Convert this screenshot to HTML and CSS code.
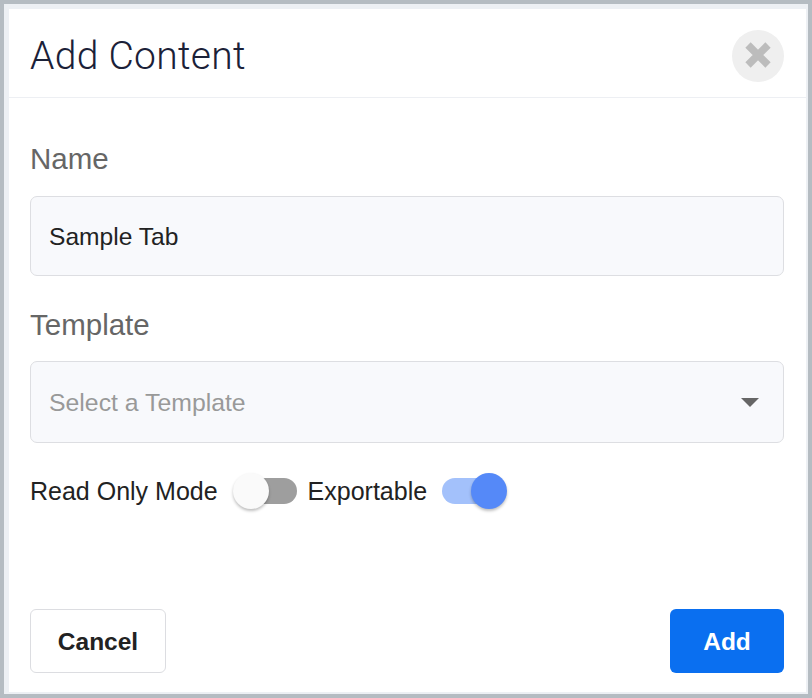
FILE: index.html
```html
<!DOCTYPE html>
<html>
<head>
<meta charset="utf-8">
<link rel="stylesheet" href="styles.css">
</head>
<body>
<div class="frame">
  <div class="panel">
    <div class="header">
      <h1 class="title">Add Content</h1>
      <button class="close" aria-label="Close">
        <svg width="28" height="28" viewBox="0 0 28 28"><path d="M4 4 L24 24 M24 4 L4 24" stroke="#bcbcbc" stroke-width="7.5" stroke-linecap="butt"/></svg>
      </button>
    </div>
    <div class="body">
      <label class="label">Name</label>
      <div class="input">Sample Tab</div>
      <label class="label label-template">Template</label>
      <div class="select">
        <span class="placeholder">Select a Template</span>
        <span class="caret"></span>
      </div>
      <div class="toggles">
        <span class="toggle-label">Read Only Mode</span>
        <span class="switch off"><span class="track"></span><span class="knob"></span></span>
        <span class="toggle-label">Exportable</span>
        <span class="switch on"><span class="track"></span><span class="knob"></span></span>
      </div>
    </div>
    <div class="footer">
      <button class="btn btn-cancel">Cancel</button>
      <button class="btn btn-add">Add</button>
    </div>
  </div>
</div>
</body>
</html>
```
FILE: styles.css
```css
html, body {
  margin: 0;
  padding: 0;
}
body {
  background: #b5bcc2;
  width: 812px;
  height: 698px;
  padding: 4px;
  box-sizing: border-box;
  font-family: "Liberation Sans", Arial, sans-serif;
}
.frame {
  background: #edf0f4;
  height: 690px;
  padding: 5px 2px 2px 5px;
  box-sizing: border-box;
}
.panel {
  background: #ffffff;
  height: 100%;
  display: flex;
  flex-direction: column;
  box-sizing: border-box;
}
.header {
  height: 89px;
  box-sizing: border-box;
  border-bottom: 1px solid #edeff3;
  display: flex;
  align-items: center;
  justify-content: space-between;
  padding: 0 22px 0 21px;
}
.title {
  margin: 0;
  font-family: Roboto, "Liberation Sans", sans-serif;
  font-weight: 300;
  font-size: 39px;
  color: #1b2138;
  letter-spacing: 0.3px;
  padding-top: 6px;
}
.close {
  width: 52px;
  height: 52px;
  border-radius: 50%;
  border: none;
  background: #efefef;
  display: flex;
  align-items: center;
  justify-content: center;
  padding: 0;
  margin-top: 6px;
}
.close svg {
  margin-top: -2px;
}
.body {
  padding: 45px 22px 0 21px;
  display: flex;
  flex-direction: column;
}
.label {
  font-size: 29.5px;
  line-height: 32px;
  color: #666666;
  height: 32px;
}
.input, .select {
  margin-top: 21px;
  height: 80px;
  box-sizing: border-box;
  background: #f8f9fc;
  border: 1px solid #dddee2;
  border-radius: 7px;
  display: flex;
  align-items: center;
  padding: 0 18px;
  font-size: 24.6px;
  color: #222222;
}
.input {
  padding-top: 2px;
}
.label-template {
  margin-top: 33px;
}
.select {
  margin-top: 20px;
  height: 82px;
  justify-content: space-between;
  padding-right: 24px;
  padding-top: 2px;
  font-size: 24.8px;
}
.placeholder {
  color: #999999;
}
.caret {
  width: 0;
  height: 0;
  border-left: 9px solid transparent;
  border-right: 9px solid transparent;
  border-top: 9px solid #666666;
  margin-top: -2px;
}
.toggles {
  margin-top: 30px;
  height: 36px;
  display: flex;
  align-items: center;
  font-size: 25px;
  color: #222222;
}
.switch {
  position: relative;
  height: 36px;
  display: inline-block;
}
.switch.off {
  width: 62px;
  margin-left: 17px;
  margin-right: 11px;
}
.switch.on {
  width: 65px;
  margin-left: 15px;
}
.track {
  position: absolute;
  top: 5px;
  height: 26px;
  border-radius: 13px;
}
.switch.off .track {
  left: 4px;
  right: 0;
  background: #9e9e9e;
}
.switch.on .track {
  left: 0;
  right: 7px;
  background: #a3c1fb;
}
.knob {
  position: absolute;
  top: 0;
  width: 36px;
  height: 36px;
  border-radius: 50%;
  box-shadow: 0 2px 3px rgba(0,0,0,0.25);
}
.switch.off .knob {
  left: -2px;
  background: #fafafa;
}
.switch.on .knob {
  right: 0;
  background: #5589f8;
}
.footer {
  margin-top: auto;
  display: flex;
  justify-content: space-between;
  padding: 0 22px 19px 21px;
}
.btn {
  height: 64px;
  border-radius: 6px;
  font-family: "Liberation Sans", Arial, sans-serif;
  font-weight: bold;
  font-size: 24.5px;
  box-sizing: border-box;
  padding-top: 2px;
}
.btn-cancel {
  width: 136px;
  background: #ffffff;
  border: 1px solid #dcdde1;
  color: #222222;
}
.btn-add {
  width: 114px;
  background: #0a6ff0;
  border: none;
  color: #ffffff;
}
```
